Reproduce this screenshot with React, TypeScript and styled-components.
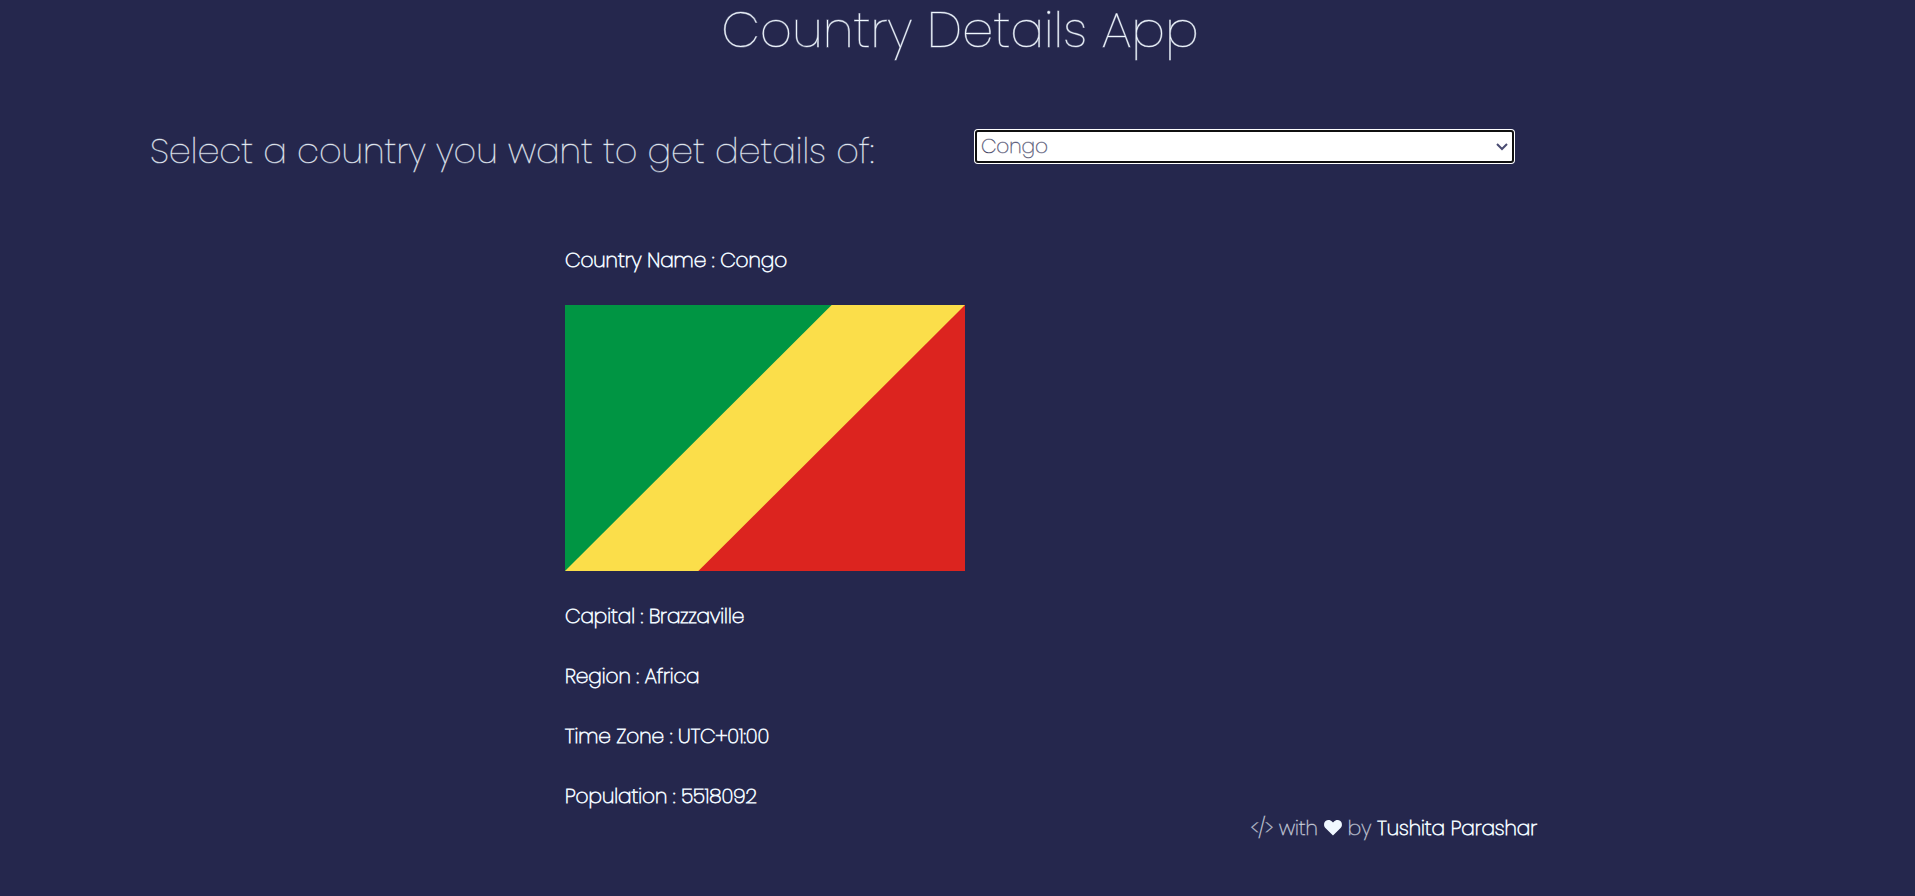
import React, { useState } from "react";
import styled, { createGlobalStyle } from "styled-components";

const GlobalStyle = createGlobalStyle`
  body {
    margin: 0;
    background: #25274d;
    color: #f0f8ff;
    font-family: Poppins, Lato, "Open Sans", sans-serif;
    font-size: 20px;
    line-height: 30px;
    font-weight: 100;
    -webkit-text-stroke: 1px rgba(240, 248, 255, 0.4);
  }
`;

const Title = styled.h1`
  margin: 0 0 56px;
  padding-left: 5px;
  font-size: 50px;
  line-height: 60px;
  font-weight: 100;
  text-align: center;
`;

const Picker = styled.div`
  display: flex;
  align-items: flex-start;
  gap: 100px;
  padding: 0 400px 0 150px;
`;

const Prompt = styled.label`
  padding-top: 10px;
  font-size: 35px;
  line-height: 50px;
  white-space: nowrap;
`;

const SelectBox = styled.div`
  flex: 1;
  display: grid;
  align-items: center;
  margin-top: 14px;
  padding: 0 1px;
`;

const Select = styled.select`
  grid-area: 1 / 1;
  width: 100%;
  height: 33px;
  padding: 0 28px 2px 4px;
  appearance: none;
  border: 2px solid #101010;
  border-radius: 3px;
  outline: none;
  box-shadow: 0 0 0 1px #ffffff;
  background: #ffffff;
  color: #25274d;
  font: inherit;
  line-height: 28px;
  -webkit-text-stroke: 1px rgba(37, 39, 77, 0.4);
`;

const Chevron = styled.svg`
  grid-area: 1 / 1;
  justify-self: end;
  margin-right: 5px;
  pointer-events: none;
`;

const Details = styled.main`
  display: flex;
  flex-direction: column;
  align-items: flex-start;
  gap: 30px;
  margin-top: 69px;
  padding-left: 565px;
`;

const Strong = styled.strong`
  font-weight: 100;
  -webkit-text-stroke: 1px currentColor;
`;

const Fact = styled.p`
  margin: 0;
`;

const Flag = styled.svg`
  display: block;
  width: 400px;
  height: 266px;
`;

const Footer = styled.footer`
  display: flex;
  justify-content: flex-end;
  align-items: center;
  gap: 6px;
  margin-top: 2px;
  padding-right: 378px;
`;

const country = {
  name: "Congo",
  capital: "Brazzaville",
  region: "Africa",
  timeZone: "UTC+01:00",
  population: 5518092,
};

const CongoFlag = () => (
  <Flag viewBox="0 0 900 600" preserveAspectRatio="none" role="img" aria-label="Flag of Congo">
    <rect width="900" height="600" fill="#fbde4a" />
    <path d="M0 0H600L0 600Z" fill="#009543" />
    <path d="M900 600H300L900 0Z" fill="#dc241f" />
  </Flag>
);

const DetailRow = ({ label, value }: { label: string; value: string | number }) => (
  <Fact>
    <Strong>
      {label} : {value}
    </Strong>
  </Fact>
);

export default function App() {
  const [selected, setSelected] = useState(country.name);
  return (
    <>
      <GlobalStyle />
      <Title>Country Details App</Title>
      <Picker>
        <Prompt htmlFor="country">Select a country you want to get details of:</Prompt>
        <SelectBox>
          <Select id="country" value={selected} onChange={(e) => setSelected(e.target.value)}>
            <option>Congo</option>
          </Select>
          <Chevron width="14" height="10" viewBox="0 0 14 10">
            <path d="M2 2L7 7L12 2" fill="none" stroke="#4a4c72" strokeWidth="2" />
          </Chevron>
        </SelectBox>
      </Picker>
      <Details>
        <DetailRow label="Country Name" value={country.name} />
        <CongoFlag />
        <DetailRow label="Capital" value={country.capital} />
        <DetailRow label="Region" value={country.region} />
        <DetailRow label="Time Zone" value={country.timeZone} />
        <DetailRow label="Population" value={country.population} />
      </Details>
      <Footer>
        <span>{"</> with"}</span>
        <svg width="18" height="16" viewBox="0 0 18 16" fill="#f0f8ff" role="img" aria-label="love">
          <path d="M9 15.5L1.4 8C-.5 6-.3 2.800 1.600 1.100C3.600-.6 6.400-.2 8.200 1.700L9 2.500L9.800 1.700C11.600-.2 14.400-.6 16.400 1.100C18.300 2.800 18.500 6 16.600 8Z" />
        </svg>
        <span>by</span>
        <Strong>Tushita Parashar</Strong>
      </Footer>
    </>
  );
}
